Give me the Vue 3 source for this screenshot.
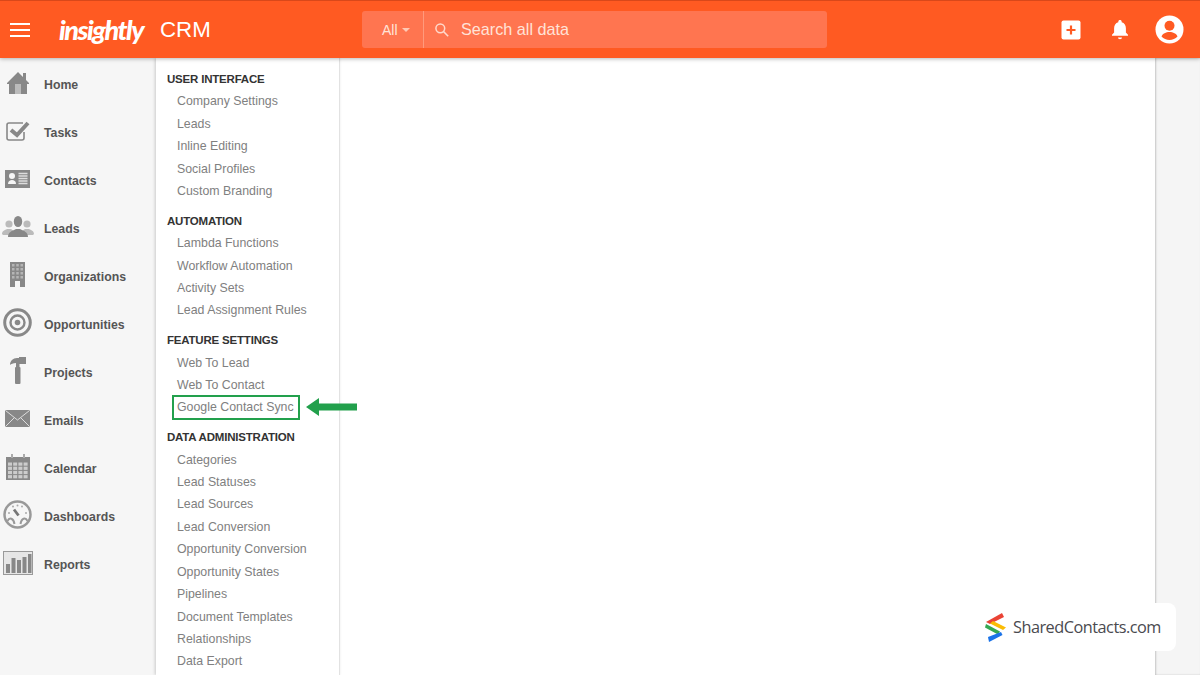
<script setup>
const nav = [
  { label: 'Home', icon: 'home' }, { label: 'Tasks', icon: 'tasks' }, { label: 'Contacts', icon: 'contacts' },
  { label: 'Leads', icon: 'leads' }, { label: 'Organizations', icon: 'org' }, { label: 'Opportunities', icon: 'opp' },
  { label: 'Projects', icon: 'proj' }, { label: 'Emails', icon: 'mail' }, { label: 'Calendar', icon: 'cal' },
  { label: 'Dashboards', icon: 'dash' }, { label: 'Reports', icon: 'rep' }
]
const sections = [
  { title: 'USER INTERFACE', items: ['Company Settings', 'Leads', 'Inline Editing', 'Social Profiles', 'Custom Branding'] },
  { title: 'AUTOMATION', items: ['Lambda Functions', 'Workflow Automation', 'Activity Sets', 'Lead Assignment Rules'] },
  { title: 'FEATURE SETTINGS', items: ['Web To Lead', 'Web To Contact', 'Google Contact Sync'] },
  { title: 'DATA ADMINISTRATION', items: ['Categories', 'Lead Statuses', 'Lead Sources', 'Lead Conversion', 'Opportunity Conversion', 'Opportunity States', 'Pipelines', 'Document Templates', 'Relationships', 'Data Export'] }
]
</script>

<template>
  <div class="page">
    <header class="top">
      <button class="burger" aria-label="Menu"><i></i><i></i><i></i></button>
      <div class="brand"><span class="logo">insightly</span><span class="crm">CRM</span></div>
      <div class="search">
        <div class="scope">All<span class="caret"></span></div>
        <div class="query">
          <svg width="16" height="16" viewBox="0 0 16 16" fill="none" stroke="#ffd9cb" stroke-width="1.5"><circle cx="6.3" cy="6.3" r="4.4"/><path d="M9.6 9.6 14.2 14.2"/></svg>
          <span>Search all data</span>
        </div>
      </div>
      <div class="actions">
        <svg class="a-plus" width="20" height="20" viewBox="0 0 20 20"><rect x="0.5" y="0.5" width="19" height="19" rx="2" fill="#fff"/><path d="M10 5.5v9M5.5 10h9" stroke="#ff5a22" stroke-width="2.2"/></svg>
        <svg class="a-bell" width="18" height="21" viewBox="0 0 18 21"><path d="M9 1c1 0 1.700.7 1.700 1.700v.5c2.800.8 4.200 3.100 4.200 6v4.300l2.100 2.200v1H1v-1l2.100-2.200V9.200c0-2.900 1.400-5.200 4.200-6v-.5C7.300 1.700 8 1 9 1Z" fill="#fff"/><path d="M7 18.500h4c0 1-.9 1.700-2 1.700s-2-.7-2-1.700Z" fill="#fff"/></svg>
        <svg class="a-user" width="29" height="29" viewBox="0 0 29 29"><circle cx="14.500" cy="14.500" r="14" fill="#fff"/><circle cx="14.500" cy="10.800" r="5" fill="#ff5a22"/><path d="M6.500 21.500c1-3 4.500-4.500 8-4.500s7 1.500 8 4.500c-2 2.200-5 3.500-8 3.500s-6-1.300-8-3.500Z" fill="#ff5a22"/></svg>
      </div>
    </header>

    <div class="body">
      <nav class="nav">
        <a v-for="n in nav" :key="n.label" class="nav-row">
          <span class="nav-icon">
            <svg v-if="n.icon === 'home'" width="24" height="24" viewBox="0 0 24 24"><path d="M1 12 12 1l5 5V2h3v7l3 3v1h-2v10H3V13H1Z" fill="#888"/><rect x="9" y="13" width="6" height="10" fill="#bbb"/></svg>
            <svg v-else-if="n.icon === 'tasks'" width="24" height="20" viewBox="0 0 24 20" fill="none"><path d="M17 2H3a2 2 0 0 0-2 2v13a2 2 0 0 0 2 2h13a2 2 0 0 0 2-2v-6" stroke="#888" stroke-width="1.600"/><path d="m5 9 6 5 11-12" stroke="#888" stroke-width="4"/></svg>
            <svg v-else-if="n.icon === 'contacts'" width="25" height="18" viewBox="0 0 25 18"><rect width="25" height="18" fill="#888"/><circle cx="7" cy="6" r="3" fill="#f6f6f6"/><path d="M3 14c0-3 2-4 4-4s4 1 4 4Z" fill="#f6f6f6"/><path d="M13.500 3.500h9M13.500 6h9M13.500 8.500h9M13.500 11h9M13.500 13.500h9" stroke="#ddd" stroke-width="1.300"/></svg>
            <svg v-else-if="n.icon === 'leads'" width="32" height="21" viewBox="0 0 32 21"><g fill="#bbb"><circle cx="7" cy="8" r="3.600"/><path d="M0 18c0-3 3-4 5-5h4l3 2v4H1Z"/><circle cx="25" cy="8" r="3.600"/><path d="M32 18c0-3-3-4-5-5h-4l-3 2v4h11Z"/></g><g fill="#888"><ellipse cx="16" cy="5.500" rx="4.200" ry="5.500"/><path d="M6 21c0-5 4-6 8-8h4c4 2 8 3 8 8Z"/></g></svg>
            <svg v-else-if="n.icon === 'org'" width="15" height="25" viewBox="0 0 15 25"><path d="M0 0h15v25H10v-6H5v6H0Z" fill="#888"/><g fill="#b5b5b5"><rect x="2" y="2" width="2.500" height="2.500"/><rect x="6.250" y="2" width="2.500" height="2.500"/><rect x="10.500" y="2" width="2.500" height="2.500"/><rect x="2" y="6" width="2.500" height="2.500"/><rect x="6.250" y="6" width="2.500" height="2.500"/><rect x="10.500" y="6" width="2.500" height="2.500"/><rect x="2" y="10" width="2.500" height="2.500"/><rect x="6.250" y="10" width="2.500" height="2.500"/><rect x="10.500" y="10" width="2.500" height="2.500"/><rect x="2" y="14" width="2.500" height="2.500"/><rect x="6.250" y="14" width="2.500" height="2.500"/><rect x="10.500" y="14" width="2.500" height="2.500"/></g></svg>
            <svg v-else-if="n.icon === 'opp'" width="29" height="29" viewBox="0 0 29 29" fill="none" stroke="#888"><circle cx="14.500" cy="14.500" r="12.800" stroke-width="3"/><circle cx="14.500" cy="14.500" r="7" stroke-width="2.400"/><circle cx="14.500" cy="14.500" r="2.800" fill="#888" stroke="none"/></svg>
            <svg v-else-if="n.icon === 'proj'" width="16" height="27" viewBox="0 0 16 27"><path d="M0 8c0-4 3-7 7-7h2V0h7v7H9.500v3H6V6C3 6 1 7 0 8Z" fill="#888"/><rect x="5" y="10" width="5.500" height="17" rx="1" fill="#888"/></svg>
            <svg v-else-if="n.icon === 'mail'" width="25" height="17" viewBox="0 0 25 17"><rect width="25" height="17" rx="1" fill="#888"/><path d="M0.500.5 12.500 10 24.500.5M0.500 16.500 9 8M24.500 16.500 16 8" fill="none" stroke="#ddd" stroke-width="1"/></svg>
            <svg v-else-if="n.icon === 'cal'" width="24" height="26" viewBox="0 0 24 26"><rect x="0" y="3" width="24" height="23" fill="#888"/><rect x="5" y="0" width="2" height="4" fill="#aaa"/><rect x="17" y="0" width="2" height="4" fill="#aaa"/><g fill="#ccc"><rect v-for="c in 16" :key="c" :x="2 + ((c - 1) % 4) * 5.200" :y="8.500 + Math.floor((c - 1) / 4) * 4.200" width="4" height="3.200"/></g></svg>
            <svg v-else-if="n.icon === 'dash'" width="29" height="29" viewBox="0 0 29 29" fill="none"><circle cx="14.500" cy="14.500" r="13" stroke="#999" stroke-width="2.500"/><path d="M4.500 21c2-4 6-3 7 3M24.500 21c-2-4-6-3-7 3" stroke="#999" stroke-width="2"/><path d="m11 9.500 4.500 6" stroke="#777" stroke-width="2.800"/><g fill="#aaa"><circle cx="6" cy="13" r="1"/><circle cx="14.500" cy="5.500" r="1"/><circle cx="10" cy="6.500" r="1"/><circle cx="19" cy="6.500" r="1"/><circle cx="23" cy="13" r="1"/></g></svg>
            <svg v-else width="30" height="24" viewBox="0 0 30 24"><rect x="0.500" y="0.500" width="29" height="23" fill="#e6e6e6" stroke="#999"/><g fill="#888"><rect x="3" y="13" width="4" height="9"/><rect x="8.500" y="7" width="4" height="15"/><rect x="14" y="9" width="4" height="13"/><rect x="19.500" y="6" width="4" height="16"/><rect x="25" y="3" width="3.500" height="19"/></g></svg>
          </span>
          <span class="nav-label">{{ n.label }}</span>
        </a>
      </nav>

      <aside class="menu">
        <section v-for="s in sections" :key="s.title" class="menu-sec">
          <h4>{{ s.title }}</h4>
          <a v-for="it in s.items" :key="it" class="menu-item" :class="{ hl: it === 'Google Contact Sync' }">
            {{ it }}
            <svg v-if="it === 'Google Contact Sync'" class="arrow" width="51" height="18" viewBox="0 0 51 18"><path d="M0 9 13 0v5.500h38v7H13V18Z" fill="#22a04c"/></svg>
          </a>
        </section>
      </aside>

      <main class="content"></main>
      <div class="gutter"></div>
    </div>

    <div class="wm">
      <svg width="21" height="29" viewBox="0 0 21 29">
        <path d="M17 0 19 4 5 11 1 9Z" fill="#ea4335"/>
        <path d="M8 9 21 15.500 18 18 5 11.500Z" fill="#fbbc05" transform="translate(0 -1)"/>
        <path d="M1 11 15 18.500 13 21.500 0 14.500Z" fill="#34a853"/>
        <path d="M16 19 17.500 22 4 29 3 24Z" fill="#1a73e8"/>
      </svg>
      <span>SharedContacts.com</span>
    </div>
  </div>
</template>

<style scoped>
.page { position: relative; width: 1200px; height: 675px; overflow: hidden; background: #f6f6f6; font-family: "Liberation Sans", Arial, sans-serif; }
.top { position: relative; z-index: 2; height: 58px; box-sizing: border-box; border-top: 1px solid #d9481a; background: #ff5a22; box-shadow: 0 1px 4px rgba(0,0,0,.28); display: flex; align-items: center; }
.burger { width: 20px; height: 14px; margin-left: 10px; padding: 0; border: 0; background: none; display: flex; flex-direction: column; justify-content: space-between; }
.burger i { display: block; height: 2px; background: #fff; }
.brand { display: flex; align-items: center; margin-left: 29px; width: 303px; }
.logo { color: #fff; font: italic 900 27px/1 "Lato", sans-serif; letter-spacing: -1.500px; width: 100px; flex: none; }
.crm { color: #fff; font-size: 22.300px; margin-left: 1px; }
.search { display: flex; width: 465px; height: 37px; background: #ff7550; border-radius: 3px; color: #ffe3d8; }
.scope { width: 62px; box-sizing: border-box; padding-left: 20px; border-right: 1px solid #ff9a7c; display: flex; align-items: center; font-size: 14px; }
.caret { margin-left: 4px; margin-top: 1px; border: 4px solid transparent; border-top-color: #ffc9b5; border-bottom: 0; }
.query { display: flex; align-items: center; padding-left: 10px; gap: 11px; font-size: 16.200px; }
.actions { margin-left: auto; display: flex; align-items: center; margin-right: 16px; }
.a-plus { margin-right: 30px; margin-top: 1px; }
.a-bell { margin-right: 26px; }
.body { display: flex; height: 617px; }
.nav { width: 156px; padding-top: 3px; flex: none; }
.nav-row { display: flex; align-items: center; height: 48px; }
.nav-icon { width: 35px; margin-right: 9px; margin-bottom: 5px; flex: none; display: flex; justify-content: center; }
.nav-label { font-size: 12.300px; font-weight: 700; color: #555; }
.menu { position: relative; width: 184px; flex: none; box-sizing: border-box; background: #fff; border-right: 1px solid #e2e2e2; box-shadow: -1px 0 3px rgba(0,0,0,.18); padding: 10px 0 0 11px; }
.menu-sec { margin-bottom: 7.500px; }
.menu-sec h4 { margin: 0; height: 22.200px; line-height: 22px; font-size: 11.500px; letter-spacing: -.2px; font-weight: 700; color: #333; }
.menu-item { position: relative; display: block; height: 22.450px; line-height: 22.400px; padding-left: 10px; font-size: 12.350px; color: #808080; white-space: nowrap; }
.hl::before { content: ""; position: absolute; left: 5px; top: -1px; width: 128px; height: 25px; border: 2px solid #22a04c; box-sizing: border-box; }
.arrow { position: absolute; left: 139px; top: 1.500px; }
.content { width: 815px; flex: none; background: #fff; }
.gutter { flex: 1; background: #f5f5f5; box-shadow: inset 1px 0 2px rgba(0,0,0,.2); }
.wm { position: absolute; z-index: 3; left: 967px; top: 603px; width: 209px; height: 48px; box-sizing: border-box; padding-left: 18px; background: #fff; border-radius: 8px; display: flex; align-items: center; gap: 7px; color: #4a4a4f; font: 400 16.300px "Open Sans", sans-serif; letter-spacing: -.5px; }
</style>
